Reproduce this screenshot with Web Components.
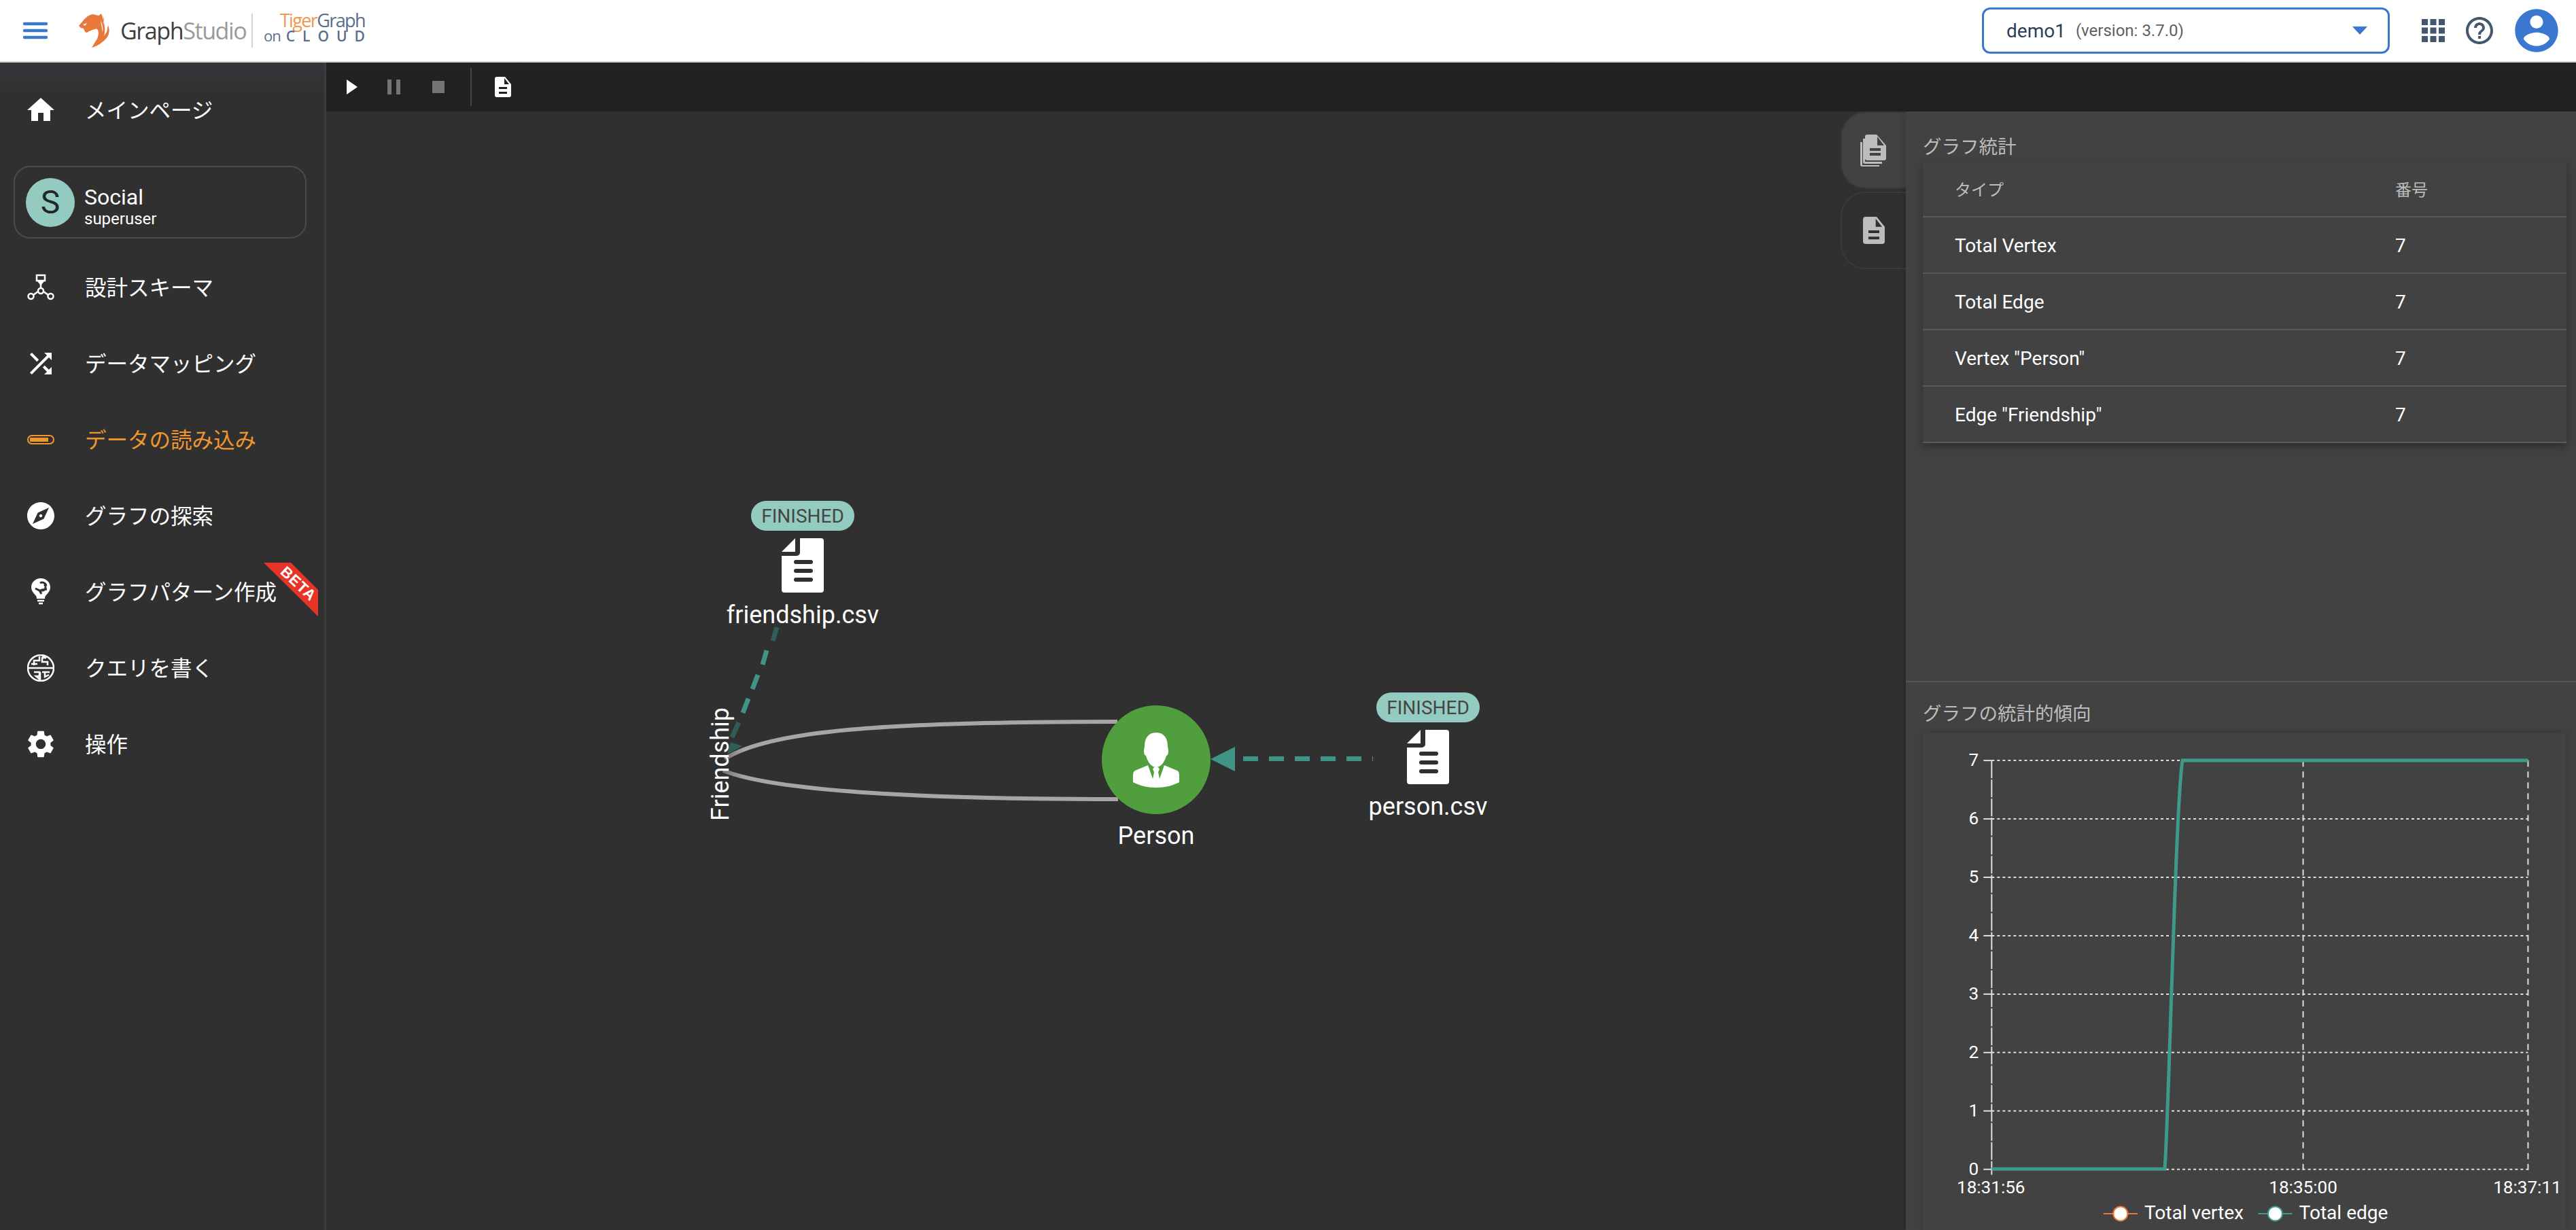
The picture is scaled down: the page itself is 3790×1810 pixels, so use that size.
<!DOCTYPE html>
<html lang="ja">
<head>
<meta charset="utf-8">
<title>GraphStudio</title>
<style>
    html, body { margin: 0; height: 100%; background: #303030; overflow: hidden; }
    body { font-family: Roboto, "Noto Sans CJK JP", sans-serif; }
</style>
</head>
<body>
<app-root></app-root>
<script>
const FONT = `Roboto, "Noto Sans CJK JP", sans-serif`;
const DOC_PATH = 'M27 0H58a4 4 0 0 1 4 4V76a4 4 0 0 1-4 4H4a4 4 0 0 1-4-4V26H22a5 5 0 0 0 5-5ZM0 20 20 0V20Z';

const headerTemplate = document.createElement('template');
headerTemplate.innerHTML = `
    <style>
        :host {
            display: flex;
            align-items: center;
            height: 90px;
            flex: none;
            background: #fff;
            border-bottom: 2px solid #d6d8da;
            font-family: ${FONT};
        }
        #burger { width: 36px; height: 26px; margin-left: 34px; flex: none; }
        #tiger { width: 52px; height: 52px; margin-left: 45px; flex: none; }
        #studio {
            margin-left: 10px;
            width: 181px;
            flex: none;
            font: 400 34px/48px "Open Sans", sans-serif;
            letter-spacing: -1.4px;
            color: #3e3e40;
            white-space: nowrap;
        }
        #studio span { color: #9a9a9a; }
        #sep { width: 2px; height: 50px; background: #d3d3d3; margin-left: 12px; flex: none; }
        #cloud { margin-left: 16px; width: 149px; flex: none; padding-bottom: 10px; font-family: "Open Sans", sans-serif; color: #5a6e8a; }
        #tg { text-align: right; font-size: 27px; line-height: 28px; letter-spacing: -1.6px; white-space: nowrap; }
        #tg b { font-weight: 400; color: #f0984f; }
        #on { display: flex; align-items: baseline; justify-content: space-between; line-height: 22px; margin-top: -3px; }
        #on small { font-size: 22px; letter-spacing: -1px; }
        #on span { font-size: 21px; font-weight: 600; letter-spacing: 11px; margin-right: -11px; }
        #version {
            display: flex;
            align-items: center;
            box-sizing: border-box;
            width: 600px;
            height: 68px;
            margin-left: auto;
            padding: 0 30px 0 33px;
            border: 3px solid #3a78d0;
            border-radius: 12px;
        }
        #version b { font-weight: 400; font-size: 28px; color: #2c3e5a; }
        #version small { font-size: 24px; color: #5f5f5f; margin-left: 15px; }
        #version svg { margin-left: auto; }
        #grid { width: 34px; height: 34px; margin-left: 47px; flex: none; }
        #help { width: 48px; height: 48px; margin-left: 27px; flex: none; }
        #avatar { width: 76px; height: 76px; margin: 0 20px 0 22px; flex: none; }
    </style>
    <svg id="burger" viewBox="0 0 36 26"><g stroke="#3a78d0" stroke-width="4.5" stroke-linecap="round"><path d="M2 3H34M2 13H34M2 23H34"/></g></svg>
    <svg id="tiger" viewBox="0 0 52 52"><path fill="#e8793a" d="M34 1 30 4 22 2C14 3 9 9 6 13L1 19l3 3 4 1 2 5 3 1 3-2 5-2c3-1 6-2 7-1 3 3 2 9 0 14l-8 13c6-1 14-6 20-12 6-6 7-13 4-21l-2 10-4 6c2-7 2-14-1-20L37 4l2 16c-1-7-3-14-5-19Z"/><path fill="#fff" d="M7 17l6-2-3 4ZM33 11c3 6 4 12 3 18-1-6-2-12-3-18Z"/></svg>
    <div id="studio">Graph<span>Studio</span></div>
    <div id="sep"></div>
    <div id="cloud">
        <div id="tg"><b>Tiger</b>Graph</div>
        <div id="on"><small>on</small><span>CLOUD</span></div>
    </div>
    <div id="version">
        <b>demo1</b><small>(version: 3.7.0)</small>
        <svg width="22" height="12" viewBox="0 0 22 12"><path fill="#3a78d0" d="M0 0H22L11 12Z"/></svg>
    </div>
    <svg id="grid" viewBox="0 0 34 34"><g fill="#45566f"><rect width="9" height="9"/><rect x="12.5" width="9" height="9"/><rect x="25" width="9" height="9"/><rect y="12.5" width="9" height="9"/><rect x="12.5" y="12.5" width="9" height="9"/><rect x="25" y="12.5" width="9" height="9"/><rect y="25" width="9" height="9"/><rect x="12.5" y="25" width="9" height="9"/><rect x="25" y="25" width="9" height="9"/></g></svg>
    <svg id="help" viewBox="0 0 24 24"><path fill="#45566f" d="M11 18h2v-2h-2v2zm1-16C6.48 2 2 6.48 2 12s4.48 10 10 10 10-4.48 10-10S17.52 2 12 2zm0 18c-4.41 0-8-3.59-8-8s3.59-8 8-8 8 3.59 8 8-3.59 8-8 8zm0-14c-2.21 0-4 1.79-4 4h2c0-1.1.9-2 2-2s2 .9 2 2c0 2-3 1.75-3 5h2c0-2.25 3-2.5 3-5 0-2.21-1.79-4-4-4z"/></svg>
    <svg id="avatar" viewBox="0 0 24 24"><path fill="#3a78d0" d="M12 2C6.48 2 2 6.48 2 12s4.48 10 10 10 10-4.48 10-10S17.52 2 12 2zm0 3c1.66 0 3 1.34 3 3s-1.34 3-3 3-3-1.34-3-3 1.34-3 3-3zm0 14.2c-2.5 0-4.71-1.28-6-3.22.03-1.99 4-3.08 6-3.08 1.99 0 5.97 1.09 6 3.08-1.29 1.94-3.5 3.22-6 3.22z"/></svg>
`;
class AppHeader extends HTMLElement {
    constructor() {
        super();
        this.attachShadow({mode: 'open'}).appendChild(headerTemplate.content.cloneNode(true));
    }
}
customElements.define('app-header', AppHeader);

const navItemTemplate = document.createElement('template');
navItemTemplate.innerHTML = `
    <style>
        :host {
            display: flex;
            align-items: center;
            position: relative;
            height: 112px;
            padding-left: 40px;
            box-sizing: border-box;
            color: #fff;
            font-size: 31.5px;
            white-space: nowrap;
        }
        :host([active]) { color: #f0962e; }
        #icon { display: flex; width: 40px; height: 40px; margin-right: 45px; align-items: center; justify-content: center; }
        #label { margin-top: -4px; }
        ::slotted(svg) { flex: none; }
    </style>
    <div id="icon"><slot name="icon"></slot></div>
    <span id="label"><slot></slot></span>
    <slot name="badge"></slot>
`;
class NavItem extends HTMLElement {
    constructor() {
        super();
        this.attachShadow({mode: 'open'}).appendChild(navItemTemplate.content.cloneNode(true));
    }
}
customElements.define('nav-item', NavItem);

const graphCardTemplate = document.createElement('template');
graphCardTemplate.innerHTML = `
    <style>
        :host {
            display: flex;
            align-items: center;
            box-sizing: border-box;
            width: 431px;
            height: 107px;
            margin: 26px 0 16px 20px;
            padding-left: 16px;
            border: 2px solid #4b4b4b;
            border-radius: 24px;
            color: #fff;
        }
        #badge {
            display: flex; align-items: center; justify-content: center;
            width: 72px; height: 72px; border-radius: 50%;
            background: #94cbc1; color: #1f2a28; font-size: 48px;
            margin-right: 14px;
        }
        #text { margin-top: 12px; }
        #name { font-size: 32px; line-height: 36px; }
        #role { font-size: 24px; line-height: 28px; }
    </style>
    <div id="badge">S</div>
    <div id="text">
        <div id="name"><slot name="name"></slot></div>
        <div id="role"><slot name="role"></slot></div>
    </div>
`;
class GraphCard extends HTMLElement {
    constructor() {
        super();
        this.attachShadow({mode: 'open'}).appendChild(graphCardTemplate.content.cloneNode(true));
    }
}
customElements.define('graph-card', GraphCard);

const toolbarTemplate = document.createElement('template');
toolbarTemplate.innerHTML = `
    <style>
        :host {
            display: flex;
            align-items: center;
            flex: none;
            height: 72px;
            background: linear-gradient(#232427, #212121 40%);
        }
        svg { flex: none; }
        #play { margin-left: 30px; }
        #pause { margin-left: 44px; }
        #stop { margin-left: 46px; }
        #sep { width: 2px; height: 56px; background: #444; margin-left: 38px; }
        #doc { margin-left: 34px; }
    </style>
    <svg id="play" width="16" height="22" viewBox="0 0 16 22"><path fill="#fff" d="M0 0 16 11 0 22Z"/></svg>
    <svg id="pause" width="20" height="22" viewBox="0 0 20 22"><path fill="#757575" d="M0 0H6V22H0ZM13 0H19V22H13Z"/></svg>
    <svg id="stop" width="18" height="18" viewBox="0 0 18 18"><rect width="18" height="18" fill="#757575"/></svg>
    <div id="sep"></div>
    <svg id="doc" width="24" height="30" viewBox="0 0 24 30"><path fill="#fff" d="M3 0H15L24 11V27a3 3 0 0 1-3 3H3a3 3 0 0 1-3-3V3a3 3 0 0 1 3-3ZM6 15V18H18V15ZM6 22V25H18V22ZM14 2V11H21Z" fill-rule="evenodd"/></svg>
`;
class RunToolbar extends HTMLElement {
    constructor() {
        super();
        this.attachShadow({mode: 'open'}).appendChild(toolbarTemplate.content.cloneNode(true));
    }
}
customElements.define('run-toolbar', RunToolbar);

const fileNode = (x, y, status, name) => `
    <g transform="translate(${x} ${y})">
        <rect x="-76" y="0" width="152" height="44" rx="22" fill="#94cbc1"/>
        <text x="0" y="32" text-anchor="middle" font-size="28" fill="#454545">${status}</text>
        <g transform="translate(-31 55)">
            <path fill="#fff" d="${DOC_PATH}"/>
            <g fill="#303030"><rect x="18" y="32" width="28" height="6" rx="3"/><rect x="18" y="45" width="28" height="6" rx="3"/><rect x="18" y="58" width="28" height="6" rx="3"/></g>
        </g>
        <text x="0" y="180" text-anchor="middle" font-size="36" fill="#fff">${name}</text>
    </g>`;

const canvasTemplate = document.createElement('template');
canvasTemplate.innerHTML = `
    <style>
        :host { display: block; flex: 1; min-width: 0; background: #303030; font-family: ${FONT}; }
        svg { display: block; width: 100%; height: 100%; }
    </style>
    <svg viewBox="480 164 2228 1646" preserveAspectRatio="xMinYMin slice">
        <defs>
            <linearGradient id="fade" gradientUnits="userSpaceOnUse" x1="1060" y1="0" x2="1095" y2="0">
                <stop offset="0" stop-color="#6e6c6e"/><stop offset="1" stop-color="#aaa4a8"/>
            </linearGradient>
        </defs>
        <path d="M1143 923 1137 943M1087 1063 1077 1085" stroke="#2f5e57" stroke-width="7" fill="none"/>
        <path d="M1128 957 1122 978M1115 993 1107 1014M1101 1028 1093 1049" stroke="#3f9486" stroke-width="7" fill="none"/>
        <path d="M1075 1092 1092 1098 1070 1110Z" fill="#2f5e57"/>
        <path d="M1644 1062C1300 1062 1130 1075 1066 1117" stroke="url(#fade)" stroke-width="6" fill="none"/>
        <path d="M1645 1176C1300 1176 1130 1160 1064 1134" stroke="url(#fade)" stroke-width="6" fill="none"/>
        <circle cx="1701" cy="1118" r="80" fill="#519e3e"/>
        <path fill="#fff" d="M1701 1078c-12 0-17 9-17 20 0 2-1 4-1 7 0 4 1 7 3 7 3 11 9 17 15 17s12-6 15-17c2 0 3-3 3-7 0-3-1-5-1-7 0-11-5-20-17-20Z"/>
        <path fill="#fff" d="M1689 1126l-19 8c-4 2-3 8-3 17 9 5 21 8 34 8s25-3 34-8c0-9 1-15-3-17l-19-8-7 20-2-10 2-4-2-3h-6l-2 3 2 4-2 10Z"/>
        <path d="M1829 1116.500H2020" stroke="#3f9486" stroke-width="7" stroke-dasharray="22 16"/>
        <path d="M1781 1117 1817 1099V1135Z" fill="#3f9486"/>
        ${fileNode(1181, 737, 'FINISHED', 'friendship.csv')}
        ${fileNode(2101, 1019, 'FINISHED', 'person.csv')}
        <text x="1701" y="1242" text-anchor="middle" font-size="36" fill="#fff">Person</text>
        <text transform="translate(1072 1208) rotate(-90)" font-size="36" fill="#fff">Friendship</text>
    </svg>
`;
class LoadCanvas extends HTMLElement {
    constructor() {
        super();
        this.attachShadow({mode: 'open'}).appendChild(canvasTemplate.content.cloneNode(true));
    }
}
customElements.define('load-canvas', LoadCanvas);

const tabsTemplate = document.createElement('template');
tabsTemplate.innerHTML = `
    <style>
        :host { display: flex; flex-direction: column; flex: none; width: 96px; background: #303030; }
        .tab {
            display: flex; align-items: center; justify-content: center;
            box-sizing: border-box;
            height: 114px;
            border: 2px solid #3a3a3a;
            border-right: 0;
            border-radius: 36px 0 0 36px;
        }
        .on { background: #424242; border-color: #383838; margin-bottom: 4px; }
    </style>
    <div class="tab on">
        <svg width="40" height="50" viewBox="0 0 40 50"><g fill="#bdbdbd"><path d="M10 2H24L38 18V37a3 3 0 0 1-3 3H10a3 3 0 0 1-3-3V5a3 3 0 0 1 3-3ZM14 22V26H30V22ZM14 29V33H30V29ZM25 5V18H35Z" fill-rule="evenodd"/><path d="M4 8V42a3 3 0 0 0 3 3H32V42H7V8ZM0 13V46a3 3 0 0 0 3 3H28V47H3V13Z"/></g></svg>
    </div>
    <div class="tab">
        <svg width="32" height="40" viewBox="0 0 24 30"><path fill="#bdbdbd" d="M3 0H15L24 11V27a3 3 0 0 1-3 3H3a3 3 0 0 1-3-3V3a3 3 0 0 1 3-3ZM6 15V18H18V15ZM6 22V25H18V22ZM14 2V11H21Z" fill-rule="evenodd"/></svg>
    </div>
`;
class SideTabs extends HTMLElement {
    constructor() {
        super();
        this.attachShadow({mode: 'open'}).appendChild(tabsTemplate.content.cloneNode(true));
    }
}
customElements.define('side-tabs', SideTabs);

const statsTableTemplate = document.createElement('template');
statsTableTemplate.innerHTML = `
    <style>
        :host {
            display: block;
            margin: 5px 14px 0 25px;
            box-shadow: 0 6px 12px rgba(0, 0, 0, .3);
            color: #fff;
            font-size: 28px;
        }
        .row {
            display: grid;
            grid-template-columns: 648px 1fr;
            align-items: center;
            box-sizing: border-box;
            height: 83px;
            padding-left: 47px;
            padding-top: 1px;
            border-bottom: 2px solid #5a5a5a;
        }
        .head { height: 82px; color: #bdbdbd; font-size: 24px; padding-top: 0; padding-bottom: 2px; }
    </style>
    <div id="rows"></div>
`;
class StatsTable extends HTMLElement {
    constructor() {
        super();
        this.attachShadow({mode: 'open'}).appendChild(statsTableTemplate.content.cloneNode(true));
        const rows = [
            ['タイプ', '番号', 'head'],
            ['Total Vertex', '7'],
            ['Total Edge', '7'],
            ['Vertex "Person"', '7'],
            ['Edge "Friendship"', '7']
        ];
        const holder = this.shadowRoot.querySelector('#rows');
        rows.forEach(([name, count, cls]) => {
            const row = document.createElement('div');
            row.className = 'row ' + (cls || '');
            row.innerHTML = '<span></span><span></span>';
            row.children[0].textContent = name;
            row.children[1].textContent = count;
            holder.appendChild(row);
        });
    }
}
customElements.define('stats-table', StatsTable);

const chartLeft = 2930, chartMid = 3387, chartRight = 3717, chartTop = 1121, chartBottom = 1721;
let chartGrid = '';
for (let i = 0; i <= 7; i++) {
    const y = chartBottom - (chartBottom - chartTop) * i / 7;
    chartGrid += `<path d="M2918 ${y}H2930" stroke="#ddd" stroke-width="2"/>`;
    chartGrid += `<path d="M2930 ${y}H${chartRight}" stroke="#ddd" stroke-width="2" stroke-dasharray="4 4"/>`;
    chartGrid += `<text x="2911" y="${y + 8}" text-anchor="end" font-size="26" fill="#fff">${i}</text>`;
}
[chartLeft, chartMid, chartRight].forEach((x, i) => {
    chartGrid += `<path d="M${x} ${chartTop}V${chartBottom + 8}" stroke="#ddd" stroke-width="2" stroke-dasharray="${i ? '9 7' : '26 2'}"/>`;
});

const statsChartTemplate = document.createElement('template');
statsChartTemplate.innerHTML = `
    <style>
        :host {
            display: block;
            flex: 1;
            min-height: 0;
            margin: 12px 15px 0 25px;
            box-shadow: 0 0 10px rgba(0, 0, 0, .2);
            font-family: ${FONT};
        }
        svg { display: block; width: 100%; height: 100%; }
    </style>
    <svg viewBox="2829 1081 946 729" preserveAspectRatio="xMinYMin slice">
        ${chartGrid}
        <path d="M2930 1720.500H3184C3190 1640 3200 1180 3210 1121H3717" fill="none" stroke="#409a8a" stroke-width="5"/>
        <text x="2929" y="1756" text-anchor="middle" font-size="26" fill="#fff">18:31:56</text>
        <text x="3387" y="1756" text-anchor="middle" font-size="26" fill="#fff">18:35:00</text>
        <text x="3716" y="1756" text-anchor="middle" font-size="26" fill="#fff">18:37:11</text>
        <path d="M3094 1786H3144" stroke="#e8793a" stroke-width="2"/>
        <circle cx="3119" cy="1786" r="10.500" fill="#fff" stroke="#e8793a" stroke-width="2"/>
        <text x="3154" y="1794" font-size="28" fill="#fff">Total vertex</text>
        <path d="M3321 1786H3371" stroke="#409a8a" stroke-width="2"/>
        <circle cx="3346" cy="1786" r="10.500" fill="#fff" stroke="#409a8a" stroke-width="2"/>
        <text x="3381" y="1794" font-size="28" fill="#fff">Total edge</text>
    </svg>
`;
class StatsChart extends HTMLElement {
    constructor() {
        super();
        this.attachShadow({mode: 'open'}).appendChild(statsChartTemplate.content.cloneNode(true));
    }
}
customElements.define('stats-chart', StatsChart);

const statsPanelTemplate = document.createElement('template');
statsPanelTemplate.innerHTML = `
    <style>
        :host {
            display: flex;
            flex-direction: column;
            flex: none;
            width: 986px;
            background: #424242;
            box-shadow: -4px 0 8px rgba(0, 0, 0, .12);
            position: relative;
        }
        #top { height: 840px; flex: none; box-sizing: border-box; padding-top: 37px; border-bottom: 2px solid #555; }
        #bottom { display: flex; flex-direction: column; flex: 1; min-height: 0; padding-top: 31px; }
        h2 { margin: 0 0 0 25px; font-weight: 400; font-size: 27.5px; line-height: 32px; color: #bdbdbd; }
    </style>
    <div id="top">
        <h2>グラフ統計</h2>
        <stats-table></stats-table>
    </div>
    <div id="bottom">
        <h2>グラフの統計的傾向</h2>
        <stats-chart></stats-chart>
    </div>
`;
class StatsPanel extends HTMLElement {
    constructor() {
        super();
        this.attachShadow({mode: 'open'}).appendChild(statsPanelTemplate.content.cloneNode(true));
    }
}
customElements.define('stats-panel', StatsPanel);

const appTemplate = document.createElement('template');
appTemplate.innerHTML = `
    <style>
        :host {
            display: flex;
            flex-direction: column;
            width: 3790px;
            height: 1810px;
            font-family: ${FONT};
        }
        #body { display: flex; flex: 1; min-height: 0; }
        #side {
            flex: none;
            width: 480px;
            box-sizing: border-box;
            padding-top: 14px;
            border-right: 3px solid #3d3d3d;
            background: linear-gradient(#34363a, #303030 50px);
        }
        #main { display: flex; flex-direction: column; flex: 1; min-width: 0; }
        #work { display: flex; flex: 1; min-height: 0; }
        #ribbon { position: absolute; left: 388px; top: 13px; overflow: visible; }
    </style>
    <app-header></app-header>
    <div id="body">
        <div id="side">
            <nav-item>メインページ
                <svg slot="icon" width="48" height="48" viewBox="0 0 24 24"><path fill="#fff" d="M10 20v-6h4v6h5v-8h3L12 3 2 12h3v8z"/></svg>
            </nav-item>
            <graph-card><span slot="name">Social</span><span slot="role">superuser</span></graph-card>
            <nav-item>設計スキーマ
                <svg slot="icon" width="40" height="40" viewBox="0 0 40 40"><g fill="none" stroke="#fff" stroke-width="2.5"><path d="M14 2H26V10H14Z"/><path d="M20 21V12M16 26 9 31M24 26 31 31"/><circle cx="20" cy="25" r="4"/><circle cx="5.5" cy="33" r="4"/><circle cx="34.5" cy="33" r="4"/></g><path fill="#fff" d="M15 11H25L20 17Z"/></svg>
            </nav-item>
            <nav-item>データマッピング
                <svg slot="icon" width="48" height="48" viewBox="0 0 24 24"><path fill="#fff" d="M10.59 9.17L5.41 4 4 5.41l5.17 5.17 1.42-1.41zM14.5 4l2.04 2.04L4 18.59 5.41 20 17.96 7.46 20 9.5V4h-5.5zm.33 9.41l-1.41 1.41 3.13 3.13L14.5 20H20v-5.5l-2.04 2.04-3.13-3.13z"/></svg>
            </nav-item>
            <nav-item active>データの読み込み
                <svg slot="icon" width="40" height="14" viewBox="0 0 40 14"><rect x="1" y="1" width="38" height="12" rx="6" fill="none" stroke="#f0962e" stroke-width="2"/><rect x="4" y="4" width="27" height="6" fill="#f0962e"/></svg>
            </nav-item>
            <nav-item>グラフの探索
                <svg slot="icon" width="48" height="48" viewBox="0 0 24 24"><path fill="#fff" d="M12 10.9c-.61 0-1.1.49-1.1 1.1s.49 1.1 1.1 1.1c.61 0 1.1-.49 1.1-1.1s-.49-1.1-1.1-1.1zM12 2C6.48 2 2 6.48 2 12s4.48 10 10 10 10-4.48 10-10S17.52 2 12 2zm2.19 12.19L6 18l3.81-8.19L18 6l-3.81 8.19z"/></svg>
            </nav-item>
            <nav-item>グラフパターン作成
                <svg slot="icon" width="28" height="40" viewBox="0 0 28 40"><path fill="#fff" d="M14 0C6 0 0 6 0 13c0 6 4 9 7 13 1 1 1 3 1 4h12c0-1 0-3 1-4 3-4 7-7 7-13C28 6 22 0 14 0Z"/><path d="M9 33H19M11 37H17" stroke="#fff" stroke-width="2.5"/><path d="M13 7a6 6 0 0 1 9 4M19 9a5 5 0 0 1-6 8M6 15l6 3 3 5M15 17l8-1" fill="none" stroke="#303030" stroke-width="3"/></svg>
                <svg slot="badge" id="ribbon" width="80" height="80" viewBox="0 0 80 80"><path fill="#e83428" d="M0 0H40L80 40V79Z"/><text transform="translate(50 32) rotate(43)" text-anchor="middle" dominant-baseline="middle" font-family="Liberation Sans, sans-serif" font-weight="700" font-size="22" letter-spacing="1" fill="#fff">BETA</text></svg>
            </nav-item>
            <nav-item>クエリを書く
                <svg slot="icon" width="40" height="40" viewBox="0 0 40 40"><g fill="none" stroke="#fff" stroke-width="2.5"><path d="M1 20a19 19 0 0 1 38 0H1a19 19 0 0 0 38 0"/><path d="M18 3V9H10V16M22 3 28 5H22V11H30V16M6 14H15M10 26H18V32H13L19 37V26M22 26H33M26 26V33L32 30"/></g></svg>
            </nav-item>
            <nav-item>操作
                <svg slot="icon" width="48" height="48" viewBox="0 0 24 24"><path fill="#fff" d="M19.14 12.94c.04-.3.06-.61.06-.94 0-.32-.02-.64-.07-.94l2.03-1.58c.18-.14.23-.41.12-.61l-1.92-3.32c-.12-.22-.37-.29-.59-.22l-2.39.96c-.5-.38-1.03-.7-1.62-.94l-.36-2.54c-.04-.24-.24-.41-.48-.41h-3.84c-.24 0-.43.17-.47.41l-.36 2.54c-.59.24-1.13.57-1.62.94l-2.39-.96c-.22-.08-.47 0-.59.22L2.74 8.87c-.12.21-.08.47.12.61l2.03 1.58c-.05.3-.09.63-.09.94s.02.64.07.94l-2.03 1.58c-.18.14-.23.41-.12.61l1.92 3.32c.12.22.37.29.59.22l2.39-.96c.5.38 1.03.7 1.62.94l.36 2.54c.05.24.24.41.48.41h3.84c.24 0 .44-.17.47-.41l.36-2.54c.59-.24 1.13-.56 1.62-.94l2.39.96c.22.08.47 0 .59-.22l1.92-3.32c.12-.22.07-.47-.12-.61l-2.01-1.58zM12 15.6c-1.98 0-3.6-1.62-3.6-3.6s1.62-3.6 3.6-3.6 3.6 1.62 3.6 3.6-1.62 3.6-3.6 3.6z"/></svg>
            </nav-item>
        </div>
        <div id="main">
            <run-toolbar></run-toolbar>
            <div id="work">
                <load-canvas></load-canvas>
                <side-tabs></side-tabs>
                <stats-panel></stats-panel>
            </div>
        </div>
    </div>
`;
class AppRoot extends HTMLElement {
    constructor() {
        super();
        this.attachShadow({mode: 'open'}).appendChild(appTemplate.content.cloneNode(true));
    }
}
customElements.define('app-root', AppRoot);
</script>
</body>
</html>
